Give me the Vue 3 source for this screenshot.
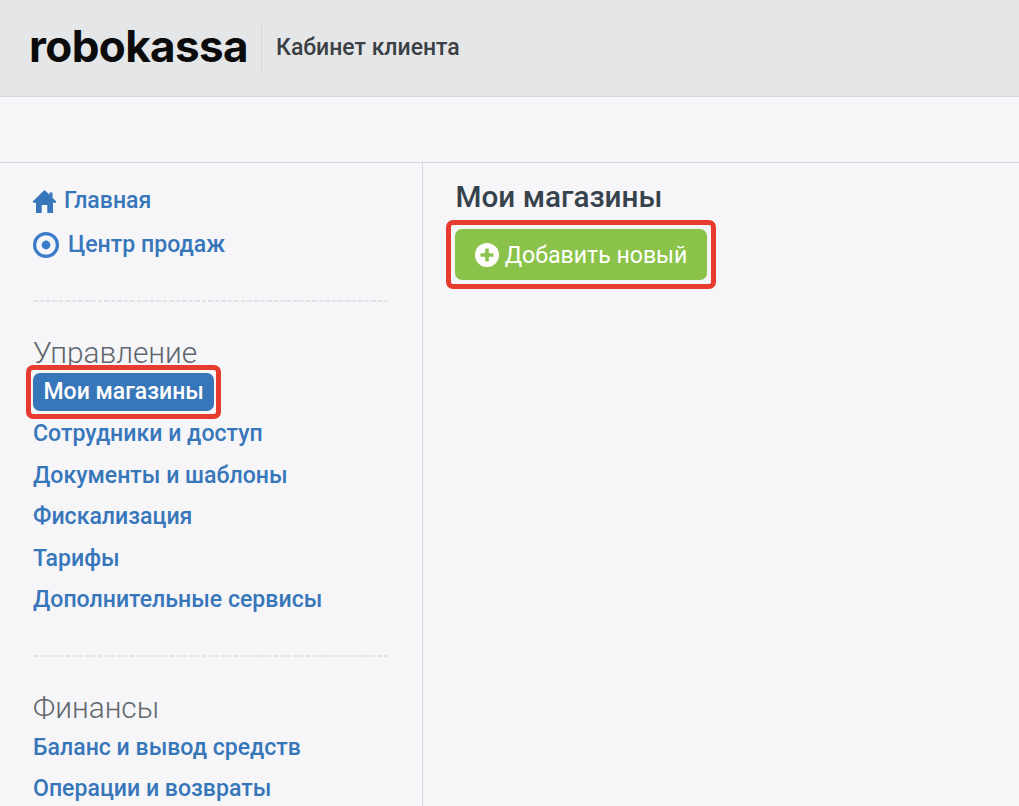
<script setup>
const top = [
  { label: 'Главная', icon: 'home' },
  { label: 'Центр продаж', icon: 'target' },
]
const sections = [
  {
    title: 'Управление',
    items: ['Мои магазины', 'Сотрудники и доступ', 'Документы и шаблоны', 'Фискализация', 'Тарифы', 'Дополнительные сервисы'],
  },
  { title: 'Финансы', items: ['Баланс и вывод средств', 'Операции и возвраты'] },
]
</script>

<template>
  <div class="page">
    <header class="header">
      <span class="logo">robokassa</span>
      <span class="cabinet">Кабинет клиента</span>
    </header>
    <div class="subbar"></div>
    <div class="body">
      <aside class="side">
        <nav class="top">
          <a v-for="t in top" :key="t.label" class="link top-link" :class="t.icon">
            <svg v-if="t.icon === 'home'" class="ic" viewBox="0 0 23 23" width="23" height="23">
              <path d="M11.5 0 16.5 4.8V2.5h3v5.2L23 11.2v1.6H20V23H14.3V15H8.7V23H3V12.8H0V11.2Z" fill="#3776b9" />
            </svg>
            <svg v-else class="ic" viewBox="0 0 26 26" width="26" height="26">
              <circle cx="13" cy="13" r="11.4" fill="none" stroke="#3a7cca" stroke-width="3.2" />
              <circle cx="13" cy="13" r="4.4" fill="#3a7cca" />
            </svg>
            {{ t.label }}
          </a>
        </nav>
        <section v-for="s in sections" :key="s.title" class="sec">
          <h3>{{ s.title }}</h3>
          <ul>
            <li v-for="it in s.items" :key="it">
              <a class="link" :class="{ active: it === 'Мои магазины' }">{{ it }}</a>
            </li>
          </ul>
        </section>
      </aside>
      <main class="main">
        <h1>Мои магазины</h1>
        <button class="add">
          <svg viewBox="0 0 24 24" width="24" height="24">
            <circle cx="12" cy="12" r="12" fill="#fff" />
            <path d="M12 5.5v13M5.5 12h13" stroke="#8bc34a" stroke-width="3.6" fill="none" />
          </svg>
          <span class="add-label">Добавить новый</span>
        </button>
      </main>
    </div>
  </div>
</template>

<style>
html, body { margin: 0; background: #f6f6f9; }
</style>

<style scoped>
.page {
  height: 806px;
  overflow: hidden;
  background: #f6f6f9;
  font-family: Roboto, "Noto Sans", sans-serif;
}
.header {
  height: 96px;
  background: #e5e6e8;
  border-bottom: 1px solid #d0d8de;
  display: flex;
  align-items: center;
  padding-left: 29px;
}
.logo {
  font-family: Inter, sans-serif;
  font-weight: 700;
  font-size: 44px;
  letter-spacing: -0.6px;
  color: #0b0b0b;
  line-height: 42px;
  padding: 0 13px 4px 0;
  border-right: 1px solid #d4d7da;
}
.cabinet {
  font-size: 23px;
  font-weight: 500;
  color: #3b4045;
  margin: 0 0 2px 14px;
}
.subbar {
  height: 65px;
  border-bottom: 1px solid #d0d8de;
}
.body { display: flex; }
.side {
  width: 423px;
  height: 644px;
  box-sizing: border-box;
  border-right: 1px solid #cfd7e2;
  padding: 0 34px 0 33px;
}
.top, .sec {
  background: repeating-linear-gradient(90deg, #e3e4e7 0 4.5px, transparent 4.5px 6.5px) bottom / 100% 2px no-repeat;
}
.top {
  display: flex;
  flex-direction: column;
  gap: 14px;
  padding: 23px 0 42px;
}
.link {
  font-size: 23.1px;
  font-weight: 500;
  color: #3776b9;
  line-height: 28px;
  display: inline-block;
}
.top-link { display: flex; align-items: center; gap: 9px; line-height: 30px; }
.top-link.home { gap: 8px; }
.sec { margin-top: 33px; padding-bottom: 36px; }
h3 {
  font-size: 29.8px;
  font-weight: 300;
  color: #5f666d;
  margin: 0;
  line-height: 36px;
}
ul { list-style: none; margin: 1px 0 0; padding: 0; }
li { height: 41.5px; display: flex; align-items: center; }
.active {
  position: relative;
  background: #3776b9;
  color: #fff;
  border-radius: 7px;
  padding: 5px 10.5px;
  margin-bottom: 2px;
  font-size: 23px;
}
.active::after {
  content: "";
  position: absolute;
  inset: -8px -7px;
  border: 5px solid #e83b30;
  border-radius: 7px;
}
.main { padding: 18px 33px; }
h1 {
  font-size: 29.7px;
  font-weight: 500;
  color: #36424c;
  margin: 0 0 16px -0.5px;
  line-height: 32px;
}
.add {
  position: relative;
  margin-left: -1px;
  display: flex;
  align-items: center;
  justify-content: center;
  gap: 6px;
  height: 51px;
  width: 252px;
  padding: 0;
  border: 0;
  border-radius: 7px;
  background: #8bc34a;
  color: #fff;
  font: 400 23.1px Roboto, sans-serif;
  white-space: nowrap;
}
.add-label { margin-top: 2px; }
.add::after {
  content: "";
  position: absolute;
  inset: -9px;
  border: 5px solid #e83b30;
  border-radius: 7px;
}
</style>
